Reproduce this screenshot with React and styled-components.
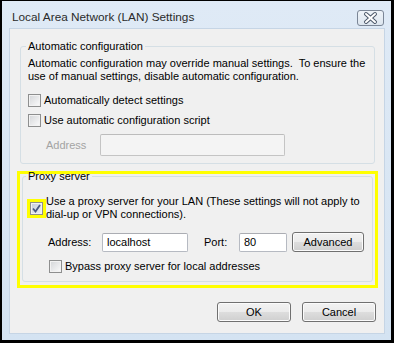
import React from "react";
import styled, { createGlobalStyle } from "styled-components";

const GlobalStyle = createGlobalStyle`
  html, body {
    margin: 0;
    padding: 0;
    background: #000;
  }
  body {
    font-family: "Liberation Sans", Arial, sans-serif;
    font-size: 11px;
    color: #000;
  }
  * {
    box-sizing: border-box;
  }
`;

const CheckBox = ({ checked, highlight }) => (
  <StBox $checked={checked} $highlight={highlight}>
    {checked && (
      <svg width="11" height="11" viewBox="0 0 11 11">
        <path d="M2 5.5 L4.5 8.5 L9 2" fill="none" stroke="#4a5a82" strokeWidth="1.8" />
      </svg>
    )}
  </StBox>
);

const App = () => {
  return (
    <>
      <GlobalStyle />
      <StWindow>
        <StTitleBar>
          <StTitle>Local Area Network (LAN) Settings</StTitle>
          <StClose>
            <svg width="25" height="14" viewBox="0 0 25 14">
              <path d="M8 3 L17 11 M17 3 L8 11" stroke="#4b5768" strokeWidth="4" strokeLinecap="round" />
              <path d="M8 3 L17 11 M17 3 L8 11" stroke="#fff" strokeWidth="2" strokeLinecap="round" />
            </svg>
          </StClose>
        </StTitleBar>

        <StPanel>
          <StGroupBox>
            <StLegend $indent={5}>Automatic configuration</StLegend>
            <StGroupBody $pt={4} $pb={7}>
              <StText>
                Automatic configuration may override manual settings.&nbsp; To ensure the
                <br />
                use of manual settings, disable automatic configuration.
              </StText>
              <StCheckRow $mt={11}>
                <CheckBox />
                <StText>Automatically detect settings</StText>
              </StCheckRow>
              <StCheckRow $mt={7}>
                <CheckBox />
                <StText>Use automatic configuration script</StText>
              </StCheckRow>
              <StFieldRow $mt={7}>
                <StFieldLabel $width={54} $disabled>Address</StFieldLabel>
                <StInput $width={185} $height={22} $disabled />
              </StFieldRow>
            </StGroupBody>
          </StGroupBox>

          <StHighlight>
            <StProxyBox>
              <StLegend $indent={3}>Proxy server</StLegend>
              <StGroupBody $pt={12} $pb={8}>
                <StCheckRow>
                  <CheckBox checked highlight />
                  <StText>
                    Use a proxy server for your LAN (These settings will not apply to
                    <br />
                    dial-up or VPN connections).
                  </StText>
                </StCheckRow>
                <StFieldRow $mt={11}>
                  <StFieldLabel $width={54}>Address:</StFieldLabel>
                  <StInput $width={86} $height={19} defaultValue="localhost" />
                  <StFieldLabel $width={35} $ml={16}>Port:</StFieldLabel>
                  <StInput $width={48} $height={19} defaultValue="80" />
                  <StButton $width={72} $ml={5}>Advanced</StButton>
                </StFieldRow>
                <StCheckRow $mt={8} $indent={19}>
                  <CheckBox />
                  <StText>Bypass proxy server for local addresses</StText>
                </StCheckRow>
              </StGroupBody>
            </StProxyBox>
          </StHighlight>

          <StButtonRow>
            <StButton $width={74}>OK</StButton>
            <StButton $width={74}>Cancel</StButton>
          </StButtonRow>
        </StPanel>
      </StWindow>
    </>
  );
};

export default App;

const StWindow = styled.div`
  width: 394px;
  height: 343px;
  border-style: solid;
  border-color: #000;
  border-width: 1px 3px 3px 2px;
  background: linear-gradient(#dfeaf6, #d4e3f2);
  display: flex;
  flex-direction: column;
  padding: 0 6px 6px 7px;
`;

const StTitleBar = styled.div`
  height: 27px;
  display: flex;
  justify-content: space-between;
  align-items: flex-start;
  padding: 0 1px 0 3px;
`;

const StTitle = styled.div`
  margin-top: 8px;
  line-height: 16px;
  font-size: 11.8px;
  color: #2a2a2a;
`;

const StClose = styled.div`
  margin-top: 9px;
  width: 27px;
  height: 16px;
  border: 1px solid #7b8696;
  border-radius: 3px;
  background: linear-gradient(#eef3f8, #dde6ef);
  display: flex;
  align-items: center;
  justify-content: center;
`;

const StPanel = styled.div`
  flex: 1;
  background: #f0f0f0;
  border: 1px solid #c6d5e5;
  padding: 10px 9px 0 10px;
  display: flex;
  flex-direction: column;
`;

const StGroupBox = styled.fieldset`
  margin: 0;
  padding: 0;
  min-width: 0;
  border: 1px solid #d5dfe5;
  border-radius: 3px;
`;

const StProxyBox = styled(StGroupBox)`
  margin: -5px 2px 3px;
`;

const StLegend = styled.legend`
  margin-left: ${(p) => p.$indent}px;
  padding: 0 2px;
  line-height: 14px;
`;

const StGroupBody = styled.div`
  padding: ${(p) => p.$pt}px 8px ${(p) => p.$pb}px 7px;
`;

const StText = styled.div`
  margin: 0;
  line-height: 13px;
  white-space: nowrap;
`;

const StCheckRow = styled.div`
  display: flex;
  align-items: center;
  gap: 3px;
  margin-top: ${(p) => p.$mt || 0}px;
  padding-left: ${(p) => p.$indent || 0}px;
`;

const StBox = styled.span`
  flex: none;
  width: 13px;
  height: 13px;
  border: 1px solid #8e8f8f;
  background: ${(p) =>
    p.$checked
      ? "linear-gradient(135deg, #c5ccd8, #eef1f6)"
      : "linear-gradient(135deg, #d3d5d8, #fbfbfb)"};
  box-shadow: inset 0 0 0 1px #f2f2f2;
  outline: ${(p) => (p.$highlight ? "3px solid #ffff00" : "none")};
  display: flex;
  align-items: center;
  justify-content: center;
`;

const StHighlight = styled.div`
  margin: 7px -3px 0;
  border: 3px solid #ffff00;
`;

const StFieldRow = styled.div`
  display: flex;
  align-items: center;
  margin-top: ${(p) => p.$mt || 0}px;
  padding-left: 18px;
`;

const StFieldLabel = styled.span`
  width: ${(p) => p.$width}px;
  margin-left: ${(p) => p.$ml || 0}px;
  color: ${(p) => (p.$disabled ? "#a3a3a3" : "#000")};
  line-height: 13px;
`;

const StInput = styled.input`
  width: ${(p) => p.$width}px;
  height: ${(p) => p.$height}px;
  padding: 0 4px;
  margin: 0;
  font-family: inherit;
  font-size: 11px;
  color: #000;
  background: ${(p) => (p.$disabled ? "#f4f4f4" : "#fff")};
  border: 1px solid ${(p) => (p.$disabled ? "#c4c4c4" : "#b6bac2")};
  border-top-color: ${(p) => (p.$disabled ? "#bcbcbc" : "#abadb3")};
  border-radius: 2px;
  outline: none;
`;

const StButton = styled.button`
  width: ${(p) => p.$width}px;
  height: 20px;
  margin: 0 0 0 ${(p) => p.$ml || 0}px;
  padding: 0;
  font-family: inherit;
  font-size: 11px;
  color: #000;
  border: 1px solid #707070;
  border-radius: 3px;
  background: linear-gradient(#f2f2f2 0%, #ebebeb 50%, #dddddd 51%, #cfcfcf 100%);
  box-shadow: inset 0 0 0 1px #fbfbfb;
`;

const StButtonRow = styled.div`
  display: flex;
  justify-content: flex-end;
  gap: 11px;
  margin: 14px -1px 0 0;
`;
